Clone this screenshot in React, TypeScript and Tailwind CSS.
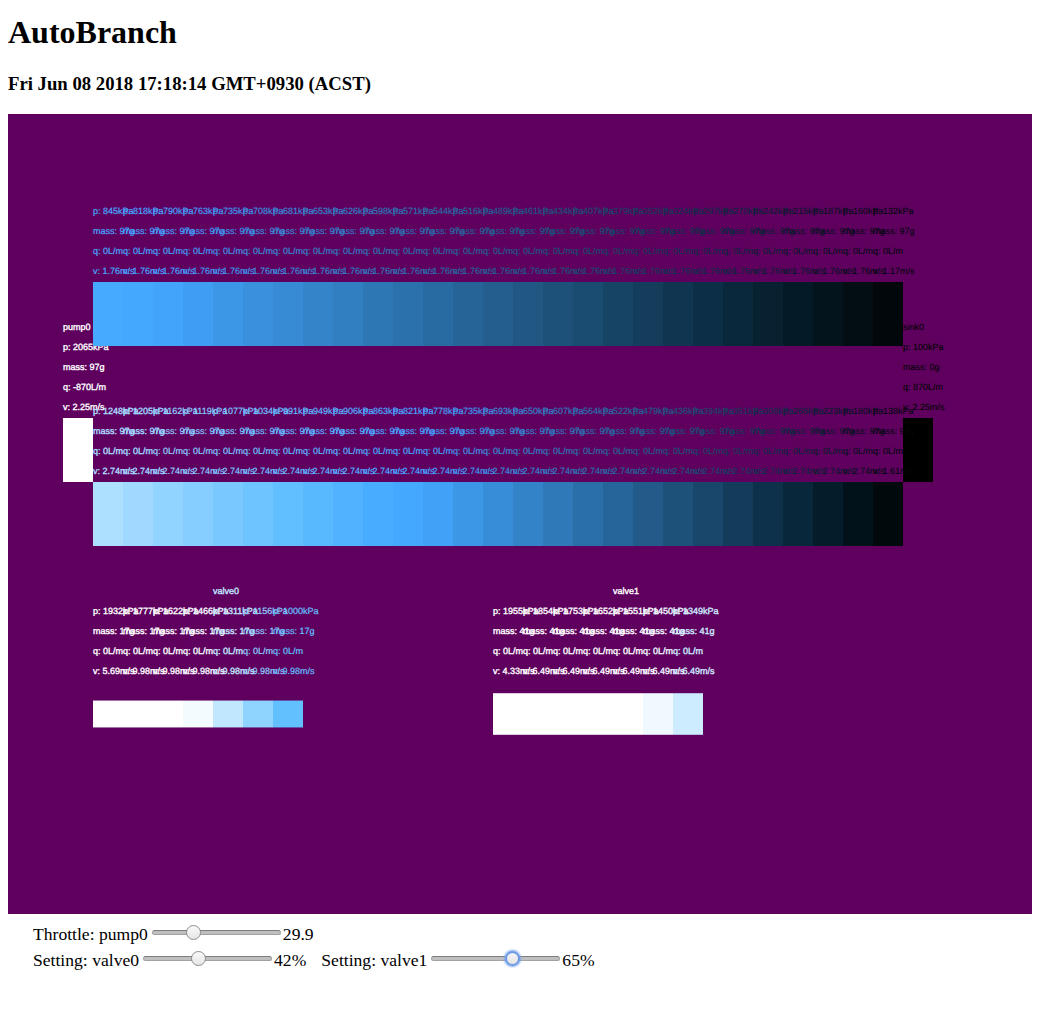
import React from "react";

type Cell = { p: number; mass: number; q: number; v: string };
type Part = { name?: string; labelCell?: number; x: number; cy: number; height: number; cells: Cell[] };

const CELL = 30;
const PIPE = 64;

// Pressure to colour: black -> blue -> white.
const STOPS: [number, number, number, number][] = [
  [100, 0, 0, 0],
  [200, 3, 23, 33],
  [300, 12, 47, 71],
  [400, 25, 73, 109],
  [520, 38, 101, 153],
  [800, 67, 166, 255],
  [850, 70, 171, 255],
  [1000, 99, 192, 255],
  [1156, 143, 211, 255],
  [1311, 193, 231, 255],
  [1500, 255, 255, 255],
];

function pressureColor(p: number): string {
  if (p <= STOPS[0][0]) return "rgb(0,0,0)";
  for (let i = 1; i < STOPS.length; i++) {
    const a = STOPS[i - 1];
    const b = STOPS[i];
    if (p <= b[0]) {
      const t = (p - a[0]) / (b[0] - a[0]);
      const mix = (k: number) => Math.round(a[k] + (b[k] - a[k]) * t);
      return `rgb(${mix(1)},${mix(2)},${mix(3)})`;
    }
  }
  return "rgb(255,255,255)";
}

function run(pressures: number[], mass: number, v: string, edge: { first?: string; last?: string }): Cell[] {
  return pressures.map((p, i) => ({
    p,
    mass,
    q: 0,
    v: i === 0 && edge.first ? edge.first : i === pressures.length - 1 && edge.last ? edge.last : v,
  }));
}

const PARTS: Part[] = [
  { name: "pump0", x: 55, cy: 336, height: PIPE, cells: [{ p: 2065, mass: 97, q: -870, v: "2.25" }] },
  { name: "sink0", x: 895, cy: 336, height: PIPE, cells: [{ p: 100, mass: 0, q: 870, v: "2.25" }] },
  {
    x: 85,
    cy: 200,
    height: PIPE,
    cells: run(
      [845, 818, 790, 763, 735, 708, 681, 653, 626, 598, 571, 544, 516, 489, 461, 434, 407, 379, 352, 324, 297, 270, 242, 215, 187, 160, 132],
      97,
      "1.76",
      { last: "1.17" },
    ),
  },
  {
    x: 85,
    cy: 400,
    height: PIPE,
    cells: run(
      [1248, 1205, 1162, 1119, 1077, 1034, 991, 949, 906, 863, 821, 778, 735, 693, 650, 607, 564, 522, 479, 436, 394, 351, 308, 266, 223, 180, 138],
      97,
      "2.74",
      { last: "1.61" },
    ),
  },
  {
    name: "valve0",
    labelCell: 4,
    x: 85,
    cy: 600,
    height: PIPE * 0.42,
    cells: run([1932, 1777, 1622, 1466, 1311, 1156, 1000], 17, "9.98", { first: "5.69" }),
  },
  {
    name: "valve1",
    labelCell: 4,
    x: 485,
    cy: 600,
    height: PIPE * 0.65,
    cells: run([1955, 1854, 1753, 1652, 1551, 1450, 1349], 41, "6.49", { first: "4.33" }),
  },
];

function PartView({ part }: { part: Part }) {
  const labelCell = part.labelCell ?? 0;
  return (
    <g>
      {part.cells.map((c, i) => {
        const x = part.x + i * CELL;
        const fill = pressureColor(c.p);
        const weight = c.p > 1200 ? 0.35 : c.p > 400 ? 0.2 : 0.1;
        const base = part.cy - 40;
        return (
          <g key={i} fill={fill}>
            <rect x={x} y={part.cy - part.height / 2} width={CELL} height={part.height} shapeRendering={part.height === PIPE ? "crispEdges" : "auto"} />
            <g stroke={fill} strokeWidth={weight}>
              {part.name && i === labelCell && <text x={x} y={base - 80}>{part.name}</text>}
              <text x={x} y={base - 60}>{`p: ${c.p}kPa`}</text>
              <text x={x} y={base - 40}>{`mass: ${c.mass}g`}</text>
              <text x={x} y={base - 20}>{`q: ${c.q}L/m`}</text>
              <text x={x} y={base}>{`v: ${c.v}m/s`}</text>
            </g>
          </g>
        );
      })}
    </g>
  );
}

function Slider({ value, focused }: { value: number; focused?: boolean }) {
  return (
    <div className="relative mx-[2px] h-4 w-[129px] shrink-0" role="slider" aria-valuenow={value}>
      <div className="absolute inset-x-0 top-[6px] h-[5px] rounded-full border border-[#a2a2a2] border-t-[#7d7d7d] bg-[#bfbfbf]" />
      <div
        className={
          focused
            ? "absolute top-[1px] size-[15px] rounded-full border-2 border-[#6a99e6] bg-linear-to-b from-[#f5f5f5] to-[#e4e4e4] shadow-[0_0_2px_1px_#7fa9f0]"
            : "absolute top-[1px] size-[15px] rounded-full border border-[#8d8d8d] bg-linear-to-b from-[#fafafa] to-[#e6e6e6]"
        }
        style={{ left: value }}
      />
    </div>
  );
}

function Control({ label, value, at, focused }: { label: string; value: string; at: number; focused?: boolean }) {
  return (
    <div className="flex items-center whitespace-nowrap">
      <span className="mr-[2px]">{label}</span>
      <div className="-mt-1">
        <Slider value={at} focused={focused} />
      </div>
      <span>{value}</span>
    </div>
  );
}

export default function App() {
  return (
    <div className="h-[1011px] overflow-hidden bg-white px-2 font-['Liberation_Serif',serif] text-black">
      <h1 className="pt-[14px] text-[32px] leading-[37px] font-bold">AutoBranch</h1>
      <h3 className="mt-[22px] text-[18.72px] leading-[22px] font-bold">Fri Jun 08 2018 17:18:14 GMT+0930 (ACST)</h3>
      <svg
        width={1024}
        height={800}
        className="mt-[19px] block bg-[#5f005f] font-['Liberation_Sans',sans-serif] text-[9px]"
        textRendering="geometricPrecision"
      >
        {PARTS.map((part, i) => (
          <PartView key={i} part={part} />
        ))}
      </svg>
      <div className="mt-[7px] ml-[25px] text-[17.6px] leading-[26px]">
        <Control label="Throttle: pump0" value="29.9" at={34} />
        <div className="flex gap-[15px]">
          <Control label="Setting: valve0" value="42%" at={48} />
          <Control label="Setting: valve1" value="65%" at={74} focused />
        </div>
      </div>
    </div>
  );
}
